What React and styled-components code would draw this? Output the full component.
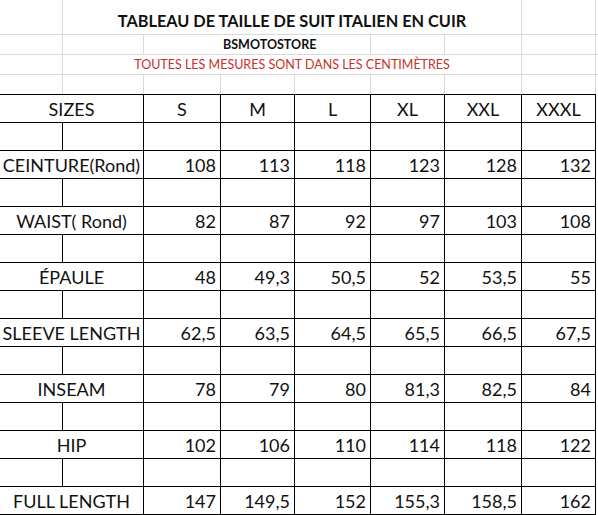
import React from 'react'
import styled, { createGlobalStyle } from 'styled-components'

const GlobalStyle = createGlobalStyle`
    html, body {
        margin: 0;
        padding: 0;
        background: #ffffff;
    }
    body {
        font-family: Lato, "Open Sans", sans-serif;
        color: #111111;
    }
`

const COLS = '63px 81px 77px 74px 76px 74px 77px 74px'

const Sheet = styled.div`
    width: 598px;
    height: 515px;
    overflow: hidden;
    background: #ffffff;
`

const HeaderGrid = styled.div`
    display: grid;
    grid-template-columns: ${COLS} 2px;
    grid-template-rows: 35px 20px 20px 19px;
`

const GridCell = styled.div`
    box-sizing: border-box;
    grid-column: ${(p) => p.$col || 'auto'};
    border-right: ${(p) => (p.$noRight ? 'none' : '1px solid #d9d9d9')};
    border-bottom: ${(p) => (p.$noBottom ? 'none' : '1px solid #d9d9d9')};
    display: flex;
    align-items: center;
    justify-content: ${(p) => p.$align || 'center'};
    padding-left: ${(p) => p.$indent || 0}px;
    white-space: nowrap;
    overflow: visible;
`

const Title = styled.span`
    font-weight: 700;
    font-size: 16.3px;
    color: #111111;
    padding-top: 6px;
`

const Store = styled.span`
    font-weight: 700;
    font-size: 12.5px;
    color: #111111;
`

const Notice = styled.span`
    font-size: 12.5px;
    color: #c9302c;
`

const Table = styled.div`
    display: grid;
    grid-template-columns: ${COLS};
    grid-auto-rows: 28px;
    border-top: 1px solid #000000;
    width: 596px;
`

const Cell = styled.div`
    box-sizing: border-box;
    grid-column: ${(p) => p.$col || 'auto'};
    border-right: 1px solid #000000;
    border-bottom: 1px solid #000000;
    display: flex;
    align-items: center;
    justify-content: ${(p) => (p.$num ? 'flex-end' : 'center')};
    padding-right: ${(p) => (p.$num ? '4px' : '0')};
    font-size: 18px;
    white-space: nowrap;
    color: #111111;
`

const sizes = ['S', 'M', 'L', 'XL', 'XXL', 'XXXL']

const rows = [
    { label: 'CEINTURE(Rond)', values: ['108', '113', '118', '123', '128', '132'] },
    { label: 'WAIST( Rond)', values: ['82', '87', '92', '97', '103', '108'] },
    { label: 'ÉPAULE', values: ['48', '49,3', '50,5', '52', '53,5', '55'] },
    { label: 'SLEEVE LENGTH', values: ['62,5', '63,5', '64,5', '65,5', '66,5', '67,5'] },
    { label: 'INSEAM', values: ['78', '79', '80', '81,3', '82,5', '84'] },
    { label: 'HIP', values: ['102', '106', '110', '114', '118', '122'] },
    { label: 'FULL LENGTH', values: ['147', '149,5', '152', '155,3', '158,5', '162'] },
]

export default function App() {
    return (
        <Sheet>
            <GlobalStyle />
            <HeaderGrid>
                {/* row 1 */}
                <GridCell />
                <GridCell $col={'2 / 8'}>
                    <Title>{'TABLEAU DE TAILLE DE SUIT ITALIEN EN CUIR'}</Title>
                </GridCell>
                <GridCell />
                <GridCell $noRight />

                {/* row 2 */}
                <GridCell />
                <GridCell />
                <GridCell $col={'3 / 6'} $align={'flex-start'} $indent={79}>
                    <Store>{'BSMOTOSTORE'}</Store>
                </GridCell>
                <GridCell />
                <GridCell />
                <GridCell />
                <GridCell $noRight />

                {/* row 3 */}
                <GridCell />
                <GridCell $col={'2 / 8'}>
                    <Notice>{'TOUTES LES MESURES SONT DANS LES CENTIMÈTRES'}</Notice>
                </GridCell>
                <GridCell />
                <GridCell $noRight />

                {/* row 4 */}
                {Array.from({ length: 8 }).map((_, i) => (
                    <GridCell key={i} $noBottom />
                ))}
                <GridCell $noRight $noBottom />
            </HeaderGrid>

            <Table>
                <Cell $col={'1 / 3'}>{'SIZES'}</Cell>
                {sizes.map((s) => (
                    <Cell key={s}>{s}</Cell>
                ))}

                {rows.map((row) => (
                    <React.Fragment key={row.label}>
                        <Cell />
                        <Cell />
                        {sizes.map((s) => (
                            <Cell key={s} />
                        ))}
                        <Cell $col={'1 / 3'}>{row.label}</Cell>
                        {row.values.map((v, i) => (
                            <Cell key={i} $num>{v}</Cell>
                        ))}
                    </React.Fragment>
                ))}
            </Table>
        </Sheet>
    )
}
